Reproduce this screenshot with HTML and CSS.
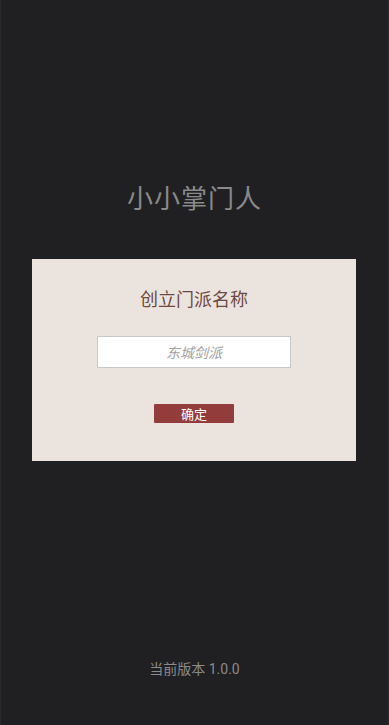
FILE: index.html
```html
<!DOCTYPE html>
<html lang="zh">
<head>
<meta charset="utf-8">
<title>小小掌门人</title>
<link rel="stylesheet" href="styles.css">
</head>
<body>
<div class="page">
  <h1 class="app-title">小小掌门人</h1>
  <div class="card">
    <h2 class="card-title">创立门派名称</h2>
    <input class="name-input" type="text" placeholder="东城剑派">
    <button class="confirm-btn">确定</button>
  </div>
  <div class="version">当前版本 1.0.0</div>
</div>
</body>
</html>
```
FILE: styles.css
```css
html, body {
  margin: 0;
  padding: 0;
  background: #202022;
}
.page {
  box-sizing: border-box;
  height: 725px;
  display: flex;
  flex-direction: column;
  align-items: center;
  padding-top: 182px;
  padding-bottom: 46px;
  border-left: 1px solid #2a2a2c;
  border-right: 1px solid #2a2a2c;
  font-family: "Noto Sans CJK SC", "Noto Sans", sans-serif;
}
.app-title {
  margin: 0;
  font-size: 26px;
  line-height: 30px;
  font-weight: 400;
  color: #8a8a8a;
  letter-spacing: 1px;
}
.card {
  box-sizing: border-box;
  margin-top: 47px;
  width: 324px;
  height: 202px;
  background: #ebe4de;
  display: flex;
  flex-direction: column;
  align-items: center;
  padding-top: 27px;
  margin-right: 1px;
}
.card-title {
  margin: 0;
  font-size: 18px;
  line-height: 24px;
  font-weight: 400;
  color: #6e4842;
}
.name-input {
  box-sizing: border-box;
  margin-top: 26px;
  width: 194px;
  height: 32px;
  border: 1px solid #c8c8c8;
  background: #ffffff;
  text-align: center;
  font-family: "Noto Sans CJK SC", sans-serif;
  font-size: 14px;
  font-style: italic;
  outline: none;
  padding: 0;
}
.name-input::placeholder {
  color: #a0a0a0;
  font-style: italic;
}
.confirm-btn {
  margin-top: 36px;
  width: 80px;
  height: 19px;
  border: none;
  border-radius: 1px;
  background: #923c3c;
  color: #ffffff;
  font-family: "Noto Sans CJK SC", sans-serif;
  font-size: 13px;
  line-height: 19px;
  padding: 0;
}
.version {
  margin-top: auto;
  font-family: "Roboto", "Noto Sans CJK SC", sans-serif;
  font-size: 14px;
  line-height: 20px;
  color: #8a8a8a;
}
```
